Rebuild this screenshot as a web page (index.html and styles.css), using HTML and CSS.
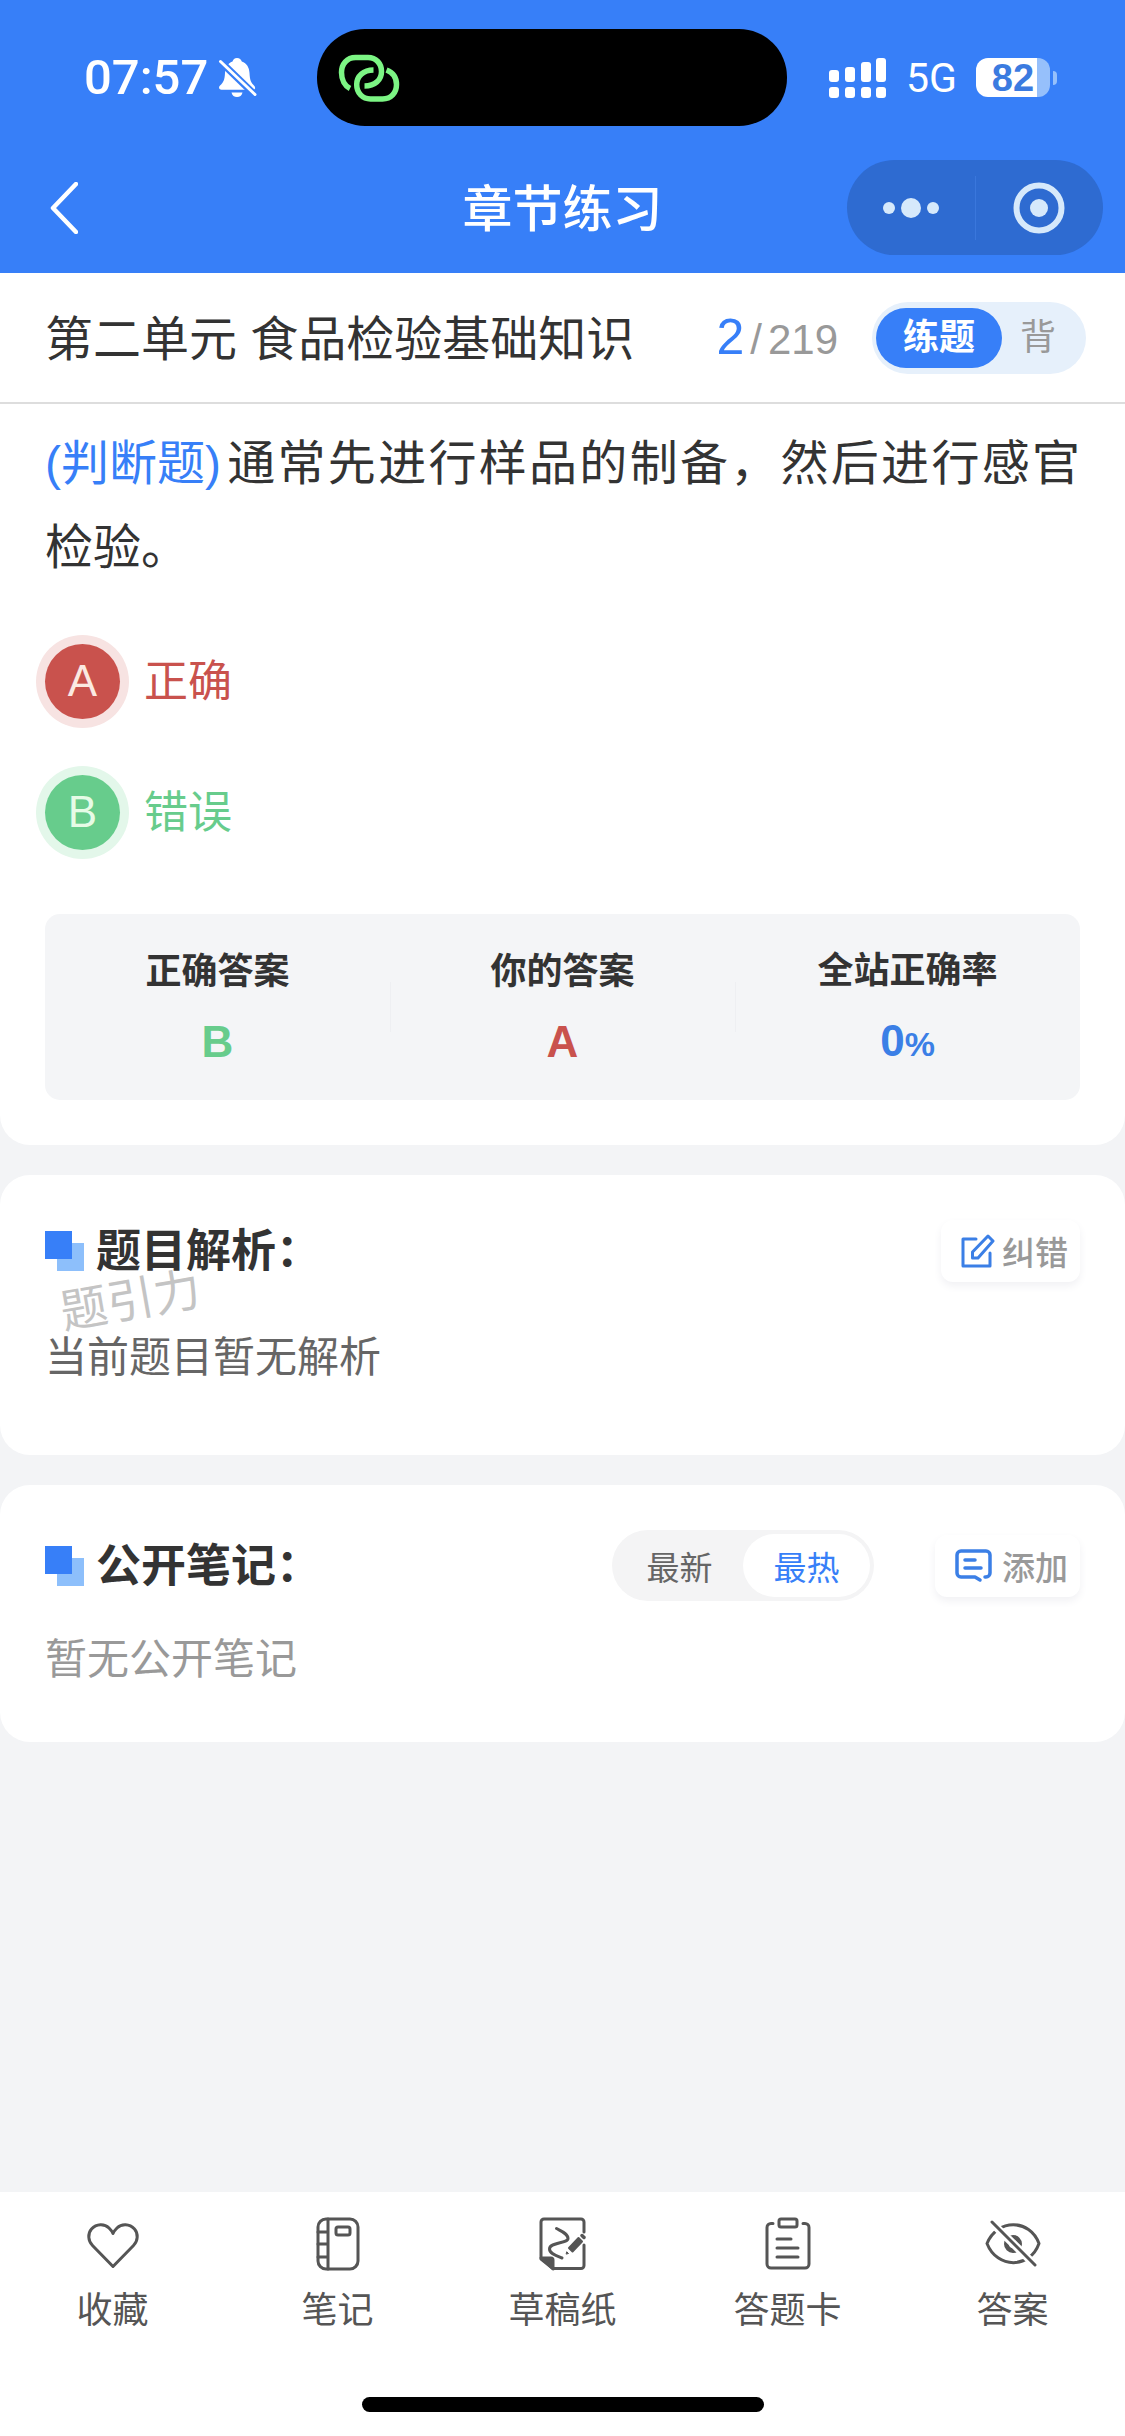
FILE: index.html
```html
<!DOCTYPE html>
<html lang="zh-CN">
<head>
<meta charset="utf-8">
<meta name="viewport" content="width=device-width, initial-scale=1">
<title>章节练习</title>
<link rel="stylesheet" href="styles.css">
</head>
<body>
<header class="top">
  <div class="status">
    <div class="status-left">
      <span class="time">07:57</span>
      <svg class="bell" width="40" height="44" viewBox="0 0 40 44" aria-hidden="true">
        <path d="M19 2c2.500 0 4.300 1.500 4.800 3.600 5 1.800 7.400 6 7.700 11.400.4 7.500 1.500 9.500 4.700 12.800 1.800 2 .8 4-1.200 4H3.500c-2.500 0-3.200-2.500-1.500-4.200 3.500-3.300 4.600-5.600 5-12.600.3-5.400 2.700-9.600 7.500-11.400C15 3.500 16.500 2 19 2z" fill="#fff"/>
        <path d="M13.500 36.500h11c-.6 3-2.800 4.500-5.500 4.500s-4.900-1.500-5.500-4.500z" fill="#fff"/>
        <path d="M2 5l36 35" stroke="#377ff8" stroke-width="7"/>
        <path d="M2.500 5.500L37 38.500" stroke="#fff" stroke-width="3" stroke-linecap="round"/>
      </svg>
    </div>
    <div class="island">
      <svg width="62" height="50" viewBox="0 0 62 50" fill="none" stroke="#7cf584" stroke-width="5.500" aria-hidden="true">
        <path d="M12 35.500C7 33 3.500 27 3.500 19.500 3.500 11 9 4.500 17.500 4.500H30C38 4.500 43.500 10.500 43.500 18.500 43.500 27 37 33 26.500 33"/>
        <path d="M35.500 17C25.500 17 18.700 23 18.700 31.500 18.700 40 24.500 46 32.500 46H44.500C53 46 58.500 40 58.500 31.500 58.500 25 55 19.500 48.500 17"/>
      </svg>
    </div>
    <div class="status-right">
      <svg width="58" height="40" viewBox="0 0 58 40" fill="#fff" aria-hidden="true">
        <rect x="0" y="12" width="10" height="12" rx="3"/><rect x="16" y="9" width="10" height="15" rx="3"/><rect x="32" y="4" width="10" height="20" rx="3"/><rect x="47" y="0" width="10" height="24" rx="3"/>
        <rect x="0" y="29" width="10" height="11" rx="3"/><rect x="16" y="29" width="10" height="11" rx="3"/><rect x="32" y="29" width="10" height="11" rx="3"/><rect x="47" y="29" width="10" height="11" rx="3"/>
      </svg>
      <span class="net">5G</span>
      <span class="battery"><span class="cell">82</span><span class="tip"></span></span>
    </div>
  </div>
  <nav class="nav">
    <button class="back" aria-label="返回">
      <svg width="28" height="52" viewBox="0 0 28 52" fill="none" stroke="#fff" stroke-width="4.500" stroke-linecap="round" stroke-linejoin="round"><path d="M26 2L3 26l23 24"/></svg>
    </button>
    <h1>章节练习</h1>
    <div class="capsule">
      <button aria-label="更多">
        <svg width="56" height="22" viewBox="0 0 56 22" fill="#d6e9fb"><circle cx="6" cy="11" r="6"/><circle cx="28" cy="11" r="10"/><circle cx="50" cy="11" r="6"/></svg>
      </button>
      <button aria-label="关闭">
        <svg width="52" height="52" viewBox="0 0 52 52"><circle cx="26" cy="26" r="22.500" fill="none" stroke="#d6e9fb" stroke-width="6"/><circle cx="26" cy="26" r="9" fill="#d6e9fb"/></svg>
      </button>
    </div>
  </nav>
</header>

<main class="main">
  <div class="chapter">
    <h2>第二单元 食品检验基础知识</h2>
    <div class="count"><b>2</b><span>/</span><span>219</span></div>
    <div class="mode" role="group" aria-label="模式">
      <button class="on" aria-pressed="true">练题</button>
      <button aria-pressed="false">背</button>
    </div>
  </div>

  <section class="card question">
    <p class="stem"><span class="kind">(判断题)</span>通常先进行样品的制备，然后进行感官检验。</p>
    <div class="options">
      <button class="option wrong"><span class="mark">A</span>正确</button>
      <button class="option right"><span class="mark">B</span>错误</button>
    </div>
    <dl class="stats">
      <div><dt>正确答案</dt><dd class="green">B</dd></div>
      <div><dt>你的答案</dt><dd class="red">A</dd></div>
      <div><dt>全站正确率</dt><dd class="blue">0<small>%</small></dd></div>
    </dl>
  </section>

  <section class="card analysis">
    <div class="head">
      <svg class="squares" width="39" height="40" viewBox="0 0 39 40" aria-hidden="true"><rect x="12" y="12" width="27" height="28" fill="#8dbffb"/><rect width="27" height="28" fill="#377ff8"/></svg>
      <h3>题目解析：</h3>
      <button class="action">
        <svg width="34" height="34" viewBox="0 0 34 34" fill="none" stroke="#3b7fe6" stroke-width="3" stroke-linejoin="round" stroke-linecap="round"><path d="M15 5H2v27h27V19"/><path d="M27 2l5 5-15 17h-5.500v-6z"/></svg>
        纠错
      </button>
    </div>
    <p class="empty">当前题目暂无解析</p>
    <span class="watermark" aria-hidden="true">题引力</span>
  </section>

  <section class="card notes">
    <div class="head">
      <svg class="squares" width="39" height="40" viewBox="0 0 39 40" aria-hidden="true"><rect x="12" y="12" width="27" height="28" fill="#8dbffb"/><rect width="27" height="28" fill="#377ff8"/></svg>
      <h3>公开笔记：</h3>
      <div class="sort" role="group" aria-label="排序">
        <button aria-pressed="false">最新</button>
        <button class="on" aria-pressed="true">最热</button>
      </div>
      <button class="action">
        <svg width="40" height="34" viewBox="0 0 40 34" fill="none" stroke="#3b7fe6" stroke-width="3.500" stroke-linecap="round" stroke-linejoin="round"><path d="M25 31l-5-3H6a4 4 0 0 1-4-4V6a4 4 0 0 1 4-4h25a4 4 0 0 1 4 4v18a4 4 0 0 1-4 4h-1"/><path d="M10 11h10M10 19h16"/></svg>
        添加
      </button>
    </div>
    <p class="empty">暂无公开笔记</p>
  </section>
</main>

<footer class="bottom">
  <nav class="tabs">
    <button>
      <svg width="56" height="56" viewBox="0 0 56 56"><path d="M28 51.500L7.500 30.500C3 26 2.500 18.500 6.500 14 11.500 8.500 19.500 8.500 24 13c2 2 3.300 3.500 4 5.500.7-2 2-3.500 4-5.500 4.500-4.500 12.500-4.500 17.500 1 4 4.500 3.500 12-1 16.500z"/></svg>
      收藏
    </button>
    <button>
      <svg width="56" height="56" viewBox="0 0 56 56"><rect x="8" y="4" width="40" height="50" rx="8"/><path d="M18 4v50M8 17h10M8 29h10M8 42h10"/><rect x="26" y="12" width="14" height="8" rx="2"/></svg>
      笔记
    </button>
    <button>
      <svg width="56" height="56" viewBox="0 0 56 56"><path d="M49 17V7a3 3 0 0 0-3-3H9a3 3 0 0 0-3 3v37l12 9.500h28a3 3 0 0 0 3-3V30"/><path d="M6 43h10q2 0 2 2v9z" fill="#555"/><path d="M21.500 13.500C26 16 33 18.500 33 23.500 33 28.500 14.500 27 14.500 34 14.500 38.500 21 40.500 27 43"/><path d="M43.500 23l3.500 3.500-9.500 10-3.500-3.500z" fill="#555" stroke-width="2"/><path d="M47 20.500l2 2" stroke-width="3.500"/><path d="M32 37l1.500 1.500-2 .5z" stroke-width="1" fill="#555"/></svg>
      草稿纸
    </button>
    <button>
      <svg width="56" height="56" viewBox="0 0 56 56"><path d="M13 8.500h-2a4 4 0 0 0-4 4V49a4 4 0 0 0 4 4h34a4 4 0 0 0 4-4V12.500a4 4 0 0 0-4-4h-2"/><rect x="19" y="4" width="18" height="8" rx="2"/><path d="M17 24h14M17 33h21M17 42h21"/></svg>
      答题卡
    </button>
    <button>
      <svg width="56" height="56" viewBox="0 0 56 56"><path d="M2 28.500C12 3.500 45 3.500 54 28.500 45 54 12 54 2 28.500z"/><circle cx="28" cy="29" r="6.500" stroke-width="5"/><path d="M2 3l53 52" stroke="#fff" stroke-width="8"/><path d="M7 7l43 43"/></svg>
      答案
    </button>
  </nav>
  <div class="home"></div>
</footer>
</body>
</html>
```
FILE: styles.css
```css
* { box-sizing: border-box; }
body {
  margin: 0;
  min-height: 100vh;
  display: flex;
  flex-direction: column;
  background: #f3f4f6;
  color: #333;
  font-family: "Liberation Sans", "Noto Sans CJK SC", sans-serif;
}
h1, h2, h3, p, dl, dd { margin: 0; }
button {
  border: 0;
  padding: 0;
  background: none;
  font: inherit;
  color: inherit;
  display: flex;
  align-items: center;
  justify-content: center;
  white-space: nowrap;
}
svg { display: block; flex: none; }

.top { background: #377ff8; color: #fff; padding-bottom: 18px; }
.status {
  height: 155px;
  display: grid;
  grid-template-columns: 317fr 470fr 338fr;
  align-items: center;
}
.status-left { display: flex; align-items: center; gap: 10px; padding-left: 84px; }
.time { font: 500 49px/56px Roboto, sans-serif; }
.island { height: 97px; border-radius: 48px; background: #000; display: flex; align-items: center; padding-left: 21px; }
.status-right { display: flex; align-items: center; gap: 19px; padding-left: 42px; }
.net { font: 400 41px/48px Roboto, sans-serif; }
.battery { display: flex; align-items: center; gap: 3px; }
.cell {
  width: 74px;
  height: 39px;
  border-radius: 12px;
  background: linear-gradient(90deg, #fff 61px, #96c0fb 61px);
  color: #3b7be0;
  font: 700 38px/40px "Liberation Sans", sans-serif;
  text-align: center;
}
.tip { width: 4px; height: 14px; border-radius: 0 4px 4px 0; background: #96c0fb; }

.nav { display: grid; grid-template-columns: 1fr auto 1fr; align-items: center; padding: 5px 22px 0; }
.back { justify-self: start; height: 95px; padding-left: 28px; }
.nav h1 { font-size: 50px; font-weight: 500; line-height: 72px; padding-top: 4px; }
.capsule { justify-self: end; display: flex; width: 256px; height: 95px; border-radius: 48px; background: #2e6bd1; align-items: center; }
.capsule button { flex: 1; height: 64px; }
.capsule button + button { border-left: 1px solid #3a77dc; }

.main { flex: 1; }
.chapter { display: flex; align-items: center; height: 131px; padding: 0 39px 0 45px; background: #fff; border-bottom: 2px solid #ddd; }
.chapter h2 { font-size: 48px; font-weight: 400; line-height: 72px; padding-top: 4px; margin-right: auto; }
.count { display: flex; align-items: baseline; gap: 6px; font-size: 42px; line-height: 60px; padding-top: 2px; color: #999; margin-right: 34px; }
.count b { font-size: 50px; font-weight: 400; color: #377ff8; }
.mode { display: flex; height: 72px; border-radius: 36px; padding: 6px 12px 6px 4px; background: #e6f0fb; color: #999; font-size: 36px; line-height: 60px; }
.mode button { width: 72px; border-radius: 30px; }
.mode .on { width: 126px; background: #377ff8; color: #fff; font-weight: 700; }

.card { background: #fff; border-radius: 30px; padding: 45px; position: relative; }
.card + .card { margin-top: 30px; }
.question { border-radius: 0 0 30px 30px; padding-top: 18px; }
.stem { font-size: 48px; line-height: 84px; text-align: justify; }
.kind { display: inline-block; color: #377ff8; margin-right: 4px; }
.options { display: grid; justify-items: start; gap: 56px; padding: 54px 0 64px; font-size: 44px; }
.option { gap: 24px; line-height: 74px; }
.mark { width: 75px; height: 75px; border-radius: 50%; color: #fbe9e2; }
.wrong { color: #c9524d; }
.wrong .mark { background: #c9524d; box-shadow: 0 0 0 9px #f7e3e2; }
.right { color: #67cc8c; }
.right .mark { background: #67cc8c; box-shadow: 0 0 0 9px #e3f7ea; color: #e6fbe6; }
.stats { display: grid; grid-template-columns: repeat(3, 1fr); height: 186px; border-radius: 15px; background: #f4f5f7; text-align: center; align-items: center; }
.stats > div + div { background: linear-gradient(#eeeff2, #eeeff2) left center / 1px 50px no-repeat; }
.stats dt { font-size: 36px; font-weight: 700; line-height: 70px; }
.stats dd { font-size: 44px; font-weight: 700; line-height: 70px; }
.stats small { font-size: 34px; }
.green { color: #67cc8c; }
.red { color: #c9524d; }
.blue { color: #3b7fe6; }

.head { display: flex; align-items: center; gap: 12px; }
.head h3 { font-size: 45px; font-weight: 700; line-height: 60px; padding-top: 2px; margin-right: auto; }
.action { height: 62px; gap: 7px; padding: 0 12px 0 20px; border-radius: 12px; background: #fff; box-shadow: 0 4px 8px #f1f1f4; font-size: 33px; font-weight: 500; color: #999; }
.empty { font-size: 42px; line-height: 60px; }
.analysis { padding-top: 45px; padding-bottom: 67px; }
.analysis .empty { margin-top: 46px; color: #666; }
.watermark { position: absolute; left: 60px; top: 96px; font-size: 47px; line-height: 60px; color: #c4c4c4; transform: rotate(-10deg); }
.notes { padding-bottom: 52px; }
.notes .empty { margin-top: 29px; color: #999; }
.sort { display: flex; height: 71px; padding: 4px; border-radius: 36px; background: #f4f4f5; font-size: 33px; color: #666; margin-right: 49px; }
.sort button { width: 127px; border-radius: 32px; }
.sort .on { background: #fff; color: #377ff8; }

.bottom { background: #fff; padding: 23px 0 24px; }
.tabs { display: grid; grid-template-columns: repeat(5, 1fr); }
.tabs button { flex-direction: column; gap: 15px; font-size: 36px; line-height: 50px; color: #555; }
.tabs svg { fill: none; stroke: #555; stroke-width: 3; stroke-linecap: round; stroke-linejoin: round; }
.home { width: 402px; height: 15px; margin: 61px auto 0; border-radius: 8px; background: #000; }
```
